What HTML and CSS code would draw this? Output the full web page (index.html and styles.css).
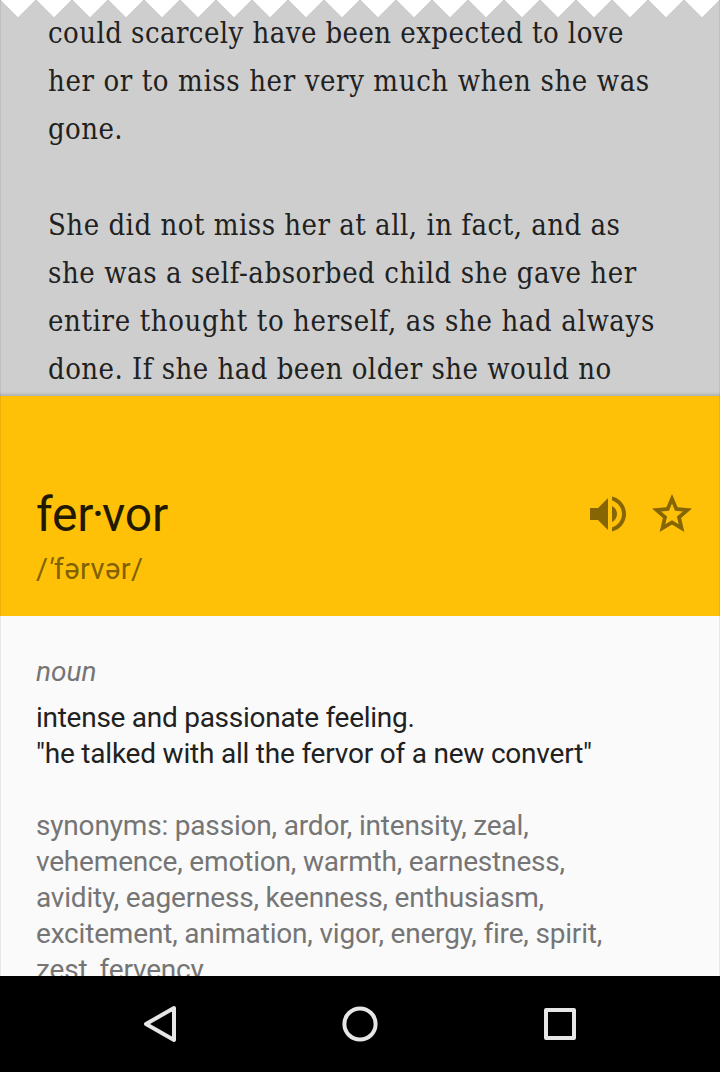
FILE: index.html
```html
<!DOCTYPE html>
<html lang="en">
<head>
<meta charset="utf-8">
<title>fervor</title>
<link rel="stylesheet" href="styles.css">
</head>
<body>
<div class="screen">
  <main class="content">
    <svg class="tear" width="720" height="20" viewBox="0 0 720 20" aria-hidden="true">
      <defs><pattern id="teeth" width="36" height="20" patternUnits="userSpaceOnUse"><path d="M0-.2 18 17.8 36-.2" fill="#fff" stroke="#c3c3c3" stroke-width=".8"/></pattern></defs>
      <rect width="720" height="20" fill="url(#teeth)"/>
    </svg>
    <section class="book">
      <p><span class="l1">could scarcely have been expected to love</span><span class="l2">her or to miss her very much when she was</span><span class="l3">gone.</span></p>
      <p><span class="l4">She did not miss her at all, in fact, and as</span><span class="l5">she was a self-absorbed child she gave her</span><span class="l6">entire thought to herself, as she had always</span><span class="l7">done. If she had been older she would no</span></p>
    </section>
    <header class="entry">
      <div class="term">
        <h1>fer<span class="dot">·</span>vor</h1>
        <div class="actions">
          <svg width="48" height="48" viewBox="0 0 24 24"><path d="M3 9v6h4l5 5V4L7 9H3z"/><path d="M14 7.97v8.05c1.48-.73 2.5-2.25 2.5-4.02S15.48 8.71 14 7.97z"/><path d="M14 3.23v2.06c2.89.86 5 3.54 5 6.71s-2.11 5.85-5 6.71v2.06c4.01-.91 7-4.49 7-8.77s-2.99-7.86-7-8.77z"/></svg>
          <svg width="48" height="48" viewBox="0 0 24 24"><path fill-rule="evenodd" d="M22 9.24l-7.19-.62L12 2 9.19 8.63 2 9.24l5.46 4.73L5.82 21 12 17.27 18.18 21l-1.63-7.03L22 9.24zM12 15.1l-3.36 2.03.9-3.83-2.97-2.58 3.92-.34L12 6.8l1.51 3.58 3.92.34-2.97 2.58.9 3.83L12 15.1z"/></svg>
        </div>
      </div>
      <div class="phonetic">/<span class="stress">′</span>fərvər/</div>
    </header>
    <section class="definition">
      <p class="pos">noun</p>
      <p class="meaning"><span class="gloss">intense and passionate feeling.</span><br>"he talked with all the fervor of a new convert"</p>
      <p class="synonyms">synonyms: passion, ardor, intensity, zeal,<br>vehemence, emotion, warmth, earnestness,<br>avidity, eagerness, keenness, enthusiasm,<br>excitement, animation, vigor, energy, fire, spirit,<br>zest, fervency</p>
    </section>
  </main>
  <nav class="navbar">
    <svg width="200" height="96" viewBox="0 0 200 96"><path d="M114 32 86 48 114 64Z"/></svg>
    <svg width="200" height="96" viewBox="0 0 200 96"><circle cx="100" cy="48" r="15.6"/></svg>
    <svg width="200" height="96" viewBox="0 0 200 96"><rect x="86" y="34" width="28" height="28"/></svg>
  </nav>
</div>
</body>
</html>
```
FILE: styles.css
```css
* { box-sizing: border-box; }
body { margin: 0; }
h1, p { margin: 0; font-weight: 400; }
.screen {
  width: 720px;
  height: 1072px;
  display: flex;
  flex-direction: column;
  overflow: hidden;
  background: #000;
  font-family: Roboto, sans-serif;
}
.content {
  position: relative;
  height: 976px;
  overflow: hidden;
  background: #fafafa;
}
.content::after {
  content: "";
  position: absolute;
  inset: 0;
  border: solid rgba(0, 0, 0, .07);
  border-width: 0 1px;
}
.tear { position: absolute; top: 0; left: 0; }
.book {
  height: 396px;
  padding: 9px 0 0 48px;
  background: linear-gradient(transparent 392px, rgba(0, 0, 0, .14)) #cecece;
  color: #212121;
  font: 29px/48px "DejaVu Serif Condensed", "DejaVu Serif", serif;
  font-stretch: condensed;
  white-space: nowrap;
}
.book p + p { margin-top: 48px; }
.book span { display: block; }
.l1 { letter-spacing: .44px; }
.l2 { letter-spacing: .61px; }
.l3 { letter-spacing: .4px; }
.l4 { letter-spacing: .5px; }
.l5 { letter-spacing: .56px; }
.l6 { letter-spacing: .63px; }
.l7 { letter-spacing: .47px; }
.entry {
  height: 220px;
  padding: 90px 24px 0 36px;
  background: #ffc107;
}
.term { display: flex; justify-content: space-between; }
.term h1 { padding-top: 2px; font-size: 48px; line-height: 54px; letter-spacing: -.2px; color: #211900; }
.dot { margin: 0 -2px 0 -1.5px; }
.actions { display: flex; gap: 16px; padding-top: 4px; }
.actions svg { fill: #856504; }
.phonetic { font-size: 29px; line-height: 36px; margin-top: 9px; letter-spacing: .4px; color: #806103; }
.stress { display: inline-block; transform: skewX(-12deg); }
.definition { padding: 38px 36px 0; font-size: 28px; line-height: 36px; white-space: nowrap; }
.pos { font-style: italic; color: #757575; }
.meaning { margin-top: 10px; letter-spacing: -.21px; color: #212121; }
.gloss { letter-spacing: -.27px; }
.synonyms { margin-top: 36px; letter-spacing: -.18px; color: #757575; }
.navbar { display: flex; justify-content: center; height: 96px; padding: 0 60px; }
.navbar svg { fill: none; stroke: #e6e6e6; stroke-width: 4; stroke-linejoin: round; }
```
